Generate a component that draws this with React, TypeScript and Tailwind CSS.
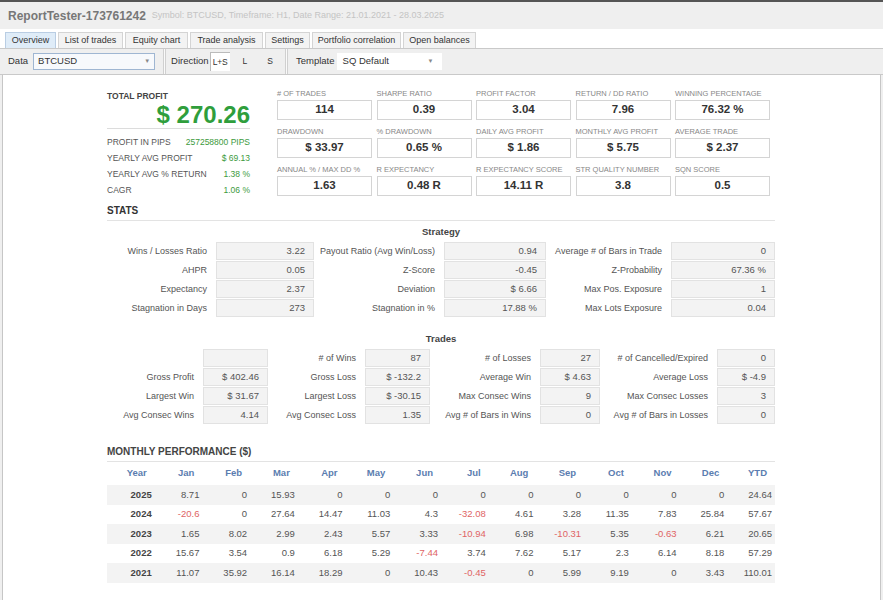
import React from 'react';

const tabs = [
  { label: 'Overview', w: 'w-[51px]', active: true },
  { label: 'List of trades', w: 'w-[65px]' },
  { label: 'Equity chart', w: 'w-[63px]' },
  { label: 'Trade analysis', w: 'w-[73px]' },
  { label: 'Settings', w: 'w-[45px]' },
  { label: 'Portfolio correlation', w: 'w-[89px]' },
  { label: 'Open balances', w: 'w-[73px]' },
];

const metrics: [string, string][] = [
  ['# OF TRADES', '114'],
  ['SHARPE RATIO', '0.39'],
  ['PROFIT FACTOR', '3.04'],
  ['RETURN / DD RATIO', '7.96'],
  ['WINNING PERCENTAGE', '76.32 %'],
  ['DRAWDOWN', '$ 33.97'],
  ['% DRAWDOWN', '0.65 %'],
  ['DAILY AVG PROFIT', '$ 1.86'],
  ['MONTHLY AVG PROFIT', '$ 5.75'],
  ['AVERAGE TRADE', '$ 2.37'],
  ['ANNUAL % / MAX DD %', '1.63'],
  ['R EXPECTANCY', '0.48 R'],
  ['R EXPECTANCY SCORE', '14.11 R'],
  ['STR QUALITY NUMBER', '3.8'],
  ['SQN SCORE', '0.5'],
];

const profitRows: [string, string][] = [
  ['PROFIT IN PIPS', '257258800 PIPS'],
  ['YEARLY AVG PROFIT', '$ 69.13'],
  ['YEARLY AVG % RETURN', '1.38 %'],
  ['CAGR', '1.06 %'],
];

const strategy: string[][] = [
  ['Wins / Losses Ratio', '3.22', 'Payout Ratio (Avg Win/Loss)', '0.94', 'Average # of Bars in Trade', '0'],
  ['AHPR', '0.05', 'Z-Score', '-0.45', 'Z-Probability', '67.36 %'],
  ['Expectancy', '2.37', 'Deviation', '$ 6.66', 'Max Pos. Exposure', '1'],
  ['Stagnation in Days', '273', 'Stagnation in %', '17.88 %', 'Max Lots Exposure', '0.04'],
];

const trades: string[][] = [
  ['', '', '# of Wins', '87', '# of Losses', '27', '# of Cancelled/Expired', '0'],
  ['Gross Profit', '$ 402.46', 'Gross Loss', '$ -132.2', 'Average Win', '$ 4.63', 'Average Loss', '$ -4.9'],
  ['Largest Win', '$ 31.67', 'Largest Loss', '$ -30.15', 'Max Consec Wins', '9', 'Max Consec Losses', '3'],
  ['Avg Consec Wins', '4.14', 'Avg Consec Loss', '1.35', 'Avg # of Bars in Wins', '0', 'Avg # of Bars in Losses', '0'],
];

const months = ['Year', 'Jan', 'Feb', 'Mar', 'Apr', 'May', 'Jun', 'Jul', 'Aug', 'Sep', 'Oct', 'Nov', 'Dec', 'YTD'];

const monthly: string[][] = [
  ['2025', '8.71', '0', '15.93', '0', '0', '0', '0', '0', '0', '0', '0', '0', '24.64'],
  ['2024', '-20.6', '0', '27.64', '14.47', '11.03', '4.3', '-32.08', '4.61', '3.28', '11.35', '7.83', '25.84', '57.67'],
  ['2023', '1.65', '8.02', '2.99', '2.43', '5.57', '3.33', '-10.94', '6.98', '-10.31', '5.35', '-0.63', '6.21', '20.65'],
  ['2022', '15.67', '3.54', '0.9', '6.18', '5.29', '-7.44', '3.74', '7.62', '5.17', '2.3', '6.14', '8.18', '57.29'],
  ['2021', '11.07', '35.92', '16.14', '18.29', '0', '10.43', '-0.45', '0', '5.99', '9.19', '0', '3.43', '110.01'],
];

const Box = ({ value }: { value: string }) => (
  <div className="h-[18px] bg-[#f3f3f3] border border-[#e2e2e2] text-right pr-[8px] leading-[16px] text-[9.5px] text-[#555]">
    {value}
  </div>
);

const Label = ({ text }: { text: string }) => (
  <div className="h-[18px] text-right pr-[9px] leading-[18px] text-[9px] text-[#555] whitespace-nowrap">{text}</div>
);

const App: React.FC = () => {
  return (
    <div className="w-[883px] h-[600px] overflow-hidden bg-[#efefef] font-['Liberation_Sans',Arial,sans-serif]">
      {/* Window top edge */}
      <div className="h-[2px] bg-[#555]" />

      {/* Title bar */}
      <div className="h-[27px] flex items-center pl-[8px] gap-[6px]">
        <span className="text-[12px] font-bold text-[#777]">ReportTester-173761242</span>
        <span className="text-[9px] text-[#c4c4c4]">Symbol: BTCUSD, Timeframe: H1, Date Range: 21.01.2021 - 28.03.2025</span>
      </div>

      {/* Tabs */}
      <div className="h-[19px] bg-white flex items-end pl-[5px] gap-[2px]">
        {tabs.map((t) => (
          <div
            key={t.label}
            className={`${t.w} h-[16px] flex items-center justify-center text-[9px] text-[#333] border border-b-0 ${
              t.active ? 'bg-[#dfecf8] border-[#b9cde3]' : 'bg-[#f3f3f3] border-[#d4d4d4]'
            }`}
          >
            {t.label}
          </div>
        ))}
      </div>

      {/* Toolbar */}
      <div className="h-[27px] border-t border-b border-[#c9c9c9] flex items-center text-[9.5px] text-[#333]">
        <span className="ml-[8px]">Data</span>
        <div className="ml-[5px] w-[122px] h-[17px] border border-[#9fb6d2] bg-[#f7f9fc] flex items-center justify-between px-[4px]">
          <span>BTCUSD</span>
          <span className="text-[6px] text-[#888]">▼</span>
        </div>
        <div className="ml-[8px] w-[3px] h-full border-x border-x-[#d0d0d0] bg-[#fafafa]" />
        <span className="ml-[5px]">Direction</span>
        <div className="ml-[1px] w-[20px] h-[19px] border-l border-t border-[#bbb] bg-white flex items-center justify-center text-[8.5px] tracking-tight">
          L+S
        </div>
        <span className="ml-[13px] text-[8.5px]">L</span>
        <span className="ml-[20px] text-[8.5px]">S</span>
        <div className="ml-[12px] w-[3px] h-full border-x border-x-[#d0d0d0] bg-[#fafafa]" />
        <span className="ml-[8px]">Template</span>
        <div className="ml-[2px] w-[105px] h-[17px] bg-white flex items-center justify-between pl-[6px] pr-[8px]">
          <span>SQ Default</span>
          <span className="text-[6px] text-[#888]">▼</span>
        </div>
      </div>

      {/* Main panel */}
      <div className="ml-[2px] w-[879px] h-[525px] bg-white border-x border-[#c6c6c6] pt-[13px]">
        <div className="ml-[104px] w-[668px]">
          {/* Summary */}
          <div className="flex items-start">
            <div className="w-[143px] mt-[2px]">
              <div className="text-[8.5px] font-bold text-[#444] leading-[12px]">TOTAL PROFIT</div>
              <div className="h-[27px] leading-[26px] text-right text-[24px] font-bold text-[#2f9e3c] border-b border-[#dcdcdc]">
                $ 270.26
              </div>
              <div className="mt-[5px]">
                {profitRows.map(([l, v]) => (
                  <div key={l} className="h-[16px] flex items-center justify-between text-[8.5px]">
                    <span className="text-[#555]">{l}</span>
                    <span className="text-[#3c9a3c]">{v}</span>
                  </div>
                ))}
              </div>
            </div>
            <div className="ml-[27px] grid grid-cols-[repeat(5,95px)] gap-x-[4.5px]">
              {metrics.map(([l, v]) => (
                <div key={l} className="h-[38px]">
                  <div className="h-[12px] leading-[12px] text-[7.5px] text-[#888] whitespace-nowrap">{l}</div>
                  <div className="h-[20px] border border-[#d4d4d4] flex items-center justify-center text-[11.5px] font-bold text-[#333]">
                    {v}
                  </div>
                </div>
              ))}
            </div>
          </div>

          {/* Stats */}
          <div className="mt-[2px] h-[17px] leading-[14px] border-b border-[#e3e3e3] text-[10px] font-bold text-[#333]">
            STATS
          </div>
          <div className="mt-[4px] h-[14px] leading-[14px] text-center text-[9.5px] font-bold text-[#444]">Strategy</div>
          <div className="mt-[3px] grid grid-cols-[109px_98px_130px_102px_125px_104px] gap-y-[1px]">
            {strategy.map((row, i) =>
              row.map((c, j) =>
                j % 2 === 0 ? <Label key={`s${i}-${j}`} text={c} /> : <Box key={`s${i}-${j}`} value={c} />
              )
            )}
          </div>

          <div className="mt-[15px] h-[14px] leading-[14px] text-center text-[9.5px] font-bold text-[#444]">Trades</div>
          <div className="mt-[3px] grid grid-cols-[96px_65px_97px_65px_110px_60px_117px_58px] gap-y-[1px]">
            {trades.map((row, i) =>
              row.map((c, j) =>
                j % 2 === 0 ? <Label key={`t${i}-${j}`} text={c} /> : <Box key={`t${i}-${j}`} value={c} />
              )
            )}
          </div>

          {/* Monthly performance */}
          <div className="mt-[21px] h-[17px] leading-[14px] border-b border-[#e3e3e3] text-[10px] font-bold text-[#444]">
            MONTHLY PERFORMANCE ($)
          </div>
          <div className="grid grid-cols-[repeat(14,minmax(0,1fr))] h-[23px] items-center">
            {months.map((m) => (
              <div key={m} className="text-right pr-[8px] text-[9.5px] font-bold text-[#5b7db0]">
                {m}
              </div>
            ))}
          </div>
          {monthly.map((row, i) => (
            <div
              key={row[0]}
              className={`grid grid-cols-[repeat(14,minmax(0,1fr))] h-[19.6px] items-center ${
                i % 2 === 0 ? 'bg-[#f3f3f3]' : 'bg-white'
              }`}
            >
              {row.map((v, j) => (
                <div
                  key={j}
                  className={`text-right pr-[3px] text-[9.5px] ${
                    j === 0 ? 'font-bold text-[#444]' : v.startsWith('-') ? 'text-[#e06464]' : 'text-[#555]'
                  }`}
                >
                  {v}
                </div>
              ))}
            </div>
          ))}
        </div>
      </div>
    </div>
  );
};

export default App;
